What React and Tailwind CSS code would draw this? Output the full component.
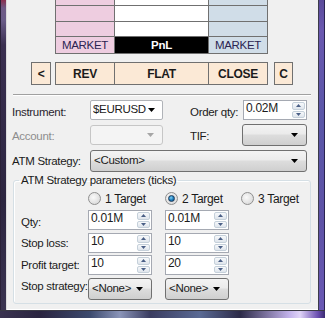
const TXT = "font-['Liberation_Sans',Arial,sans-serif] text-[11.5px] tracking-[-0.3px] text-[#1b1b1b] whitespace-nowrap";

function Tri({ color = "#000", w = 7, h = 4 }) {
  return (
    <svg width={w} height={h} viewBox={`0 0 ${w} ${h}`} className="shrink-0">
      <path d={`M0 0 L${w} 0 L${w / 2} ${h} Z`} fill={color} />
    </svg>
  );
}

function SpinButtons() {
  return (
    <div className="flex flex-col w-[14px] h-full py-[1px] pr-[1px] gap-[1px] shrink-0">
      <div className="flex-1 border border-[#c5d0da] rounded-[2px] bg-gradient-to-b from-[#f7f9fb] to-[#dfe5ec] flex items-center justify-center">
        <svg width="5" height="3" viewBox="0 0 5 3">
          <path d="M2.5 0 L5 3 L0 3 Z" fill="#4a5f86" />
        </svg>
      </div>
      <div className="flex-1 border border-[#c5d0da] rounded-[2px] bg-gradient-to-b from-[#f7f9fb] to-[#dfe5ec] flex items-center justify-center">
        <svg width="5" height="3" viewBox="0 0 5 3">
          <path d="M0 0 L5 0 L2.5 3 Z" fill="#4a5f86" />
        </svg>
      </div>
    </div>
  );
}

function SpinBox({ value, className }) {
  return (
    <div className={`h-[20px] border border-[#a5a9b2] bg-white flex ${className}`}>
      <div className="flex-1 pl-[2px] leading-[15px] text-[12px]">{value}</div>
      <SpinButtons />
    </div>
  );
}

function GradCombo({ value, className }) {
  return (
    <div
      className={`h-[22px] border border-[#707070] rounded-[3px] flex items-center pl-[3px] pr-[8px] bg-[linear-gradient(to_bottom,#f3f3f3_0%,#ebebeb_45%,#dddddd_50%,#cfcfcf_100%)] ${className}`}
    >
      <div className="flex-1 overflow-hidden">{value}</div>
      <Tri />
    </div>
  );
}

function Radio({ checked, label }) {
  return (
    <div className="flex items-center gap-[4px]">
      <div className="w-[13px] h-[13px] rounded-full border border-[#8f8f8f] bg-[radial-gradient(circle_at_40%_40%,#fafafa_0%,#e2e2e2_60%,#cfcfcf_100%)] flex items-center justify-center">
        {checked && (
          <div className="w-[7px] h-[7px] rounded-full border border-[#1d3b5a] bg-[radial-gradient(circle_at_40%_35%,#7fd0f5_0%,#1a78b8_55%,#0d4a7a_100%)]" />
        )}
      </div>
      <span className="text-[12px]">{label}</span>
    </div>
  );
}

export default function App() {
  return (
    <div className={`w-[325px] h-[318px] overflow-hidden flex flex-col bg-[#f0f0f0] ${TXT}`}>
      <div className="flex flex-1 min-h-0">
        {/* left frame */}
        <div className="w-[7px] h-full flex">
          <div className="w-[6px] h-full bg-[linear-gradient(to_bottom,#8a2f4e_0px,#6f5a86_8px,#6a5c88_20px,#3a2f50_45px,#2c2540_200px,#3a3350_310px)] border-l border-[#2a2138]" />
          <div className="w-[1px] h-full bg-[#dcdcdc]" />
        </div>

        {/* content */}
        <div className="w-[311px] h-full flex flex-col">
          {/* table */}
          <div className="ml-[48px] w-[213px] flex flex-col border-l border-[#707070]">
            <div className="flex h-[6px]">
              <div className="w-[59px] bg-[#eecde0] border-r border-b border-[#707070]" />
              <div className="w-[94px] bg-white border-r border-b border-[#707070]" />
              <div className="w-[59px] bg-[#d0dde8] border-r border-b border-[#707070]" />
            </div>
            <div className="flex h-[16px]">
              <div className="w-[59px] bg-[#eecde0] border-r border-b border-[#707070]" />
              <div className="w-[94px] bg-white border-r border-b border-[#707070]" />
              <div className="w-[59px] bg-[#d0dde8] border-r border-b border-[#707070]" />
            </div>
            <div className="flex h-[15px]">
              <div className="w-[59px] bg-[#eecde0] border-r border-b border-[#707070]" />
              <div className="w-[94px] bg-white border-r border-b border-[#707070]" />
              <div className="w-[59px] bg-[#d0dde8] border-r border-b border-[#707070]" />
            </div>
            <div className="flex h-[17px] leading-[16px]">
              <div className="w-[59px] bg-[#eecde0] border-r border-b border-[#707070] text-center text-[#2b2452]">MARKET</div>
              <div className="w-[94px] bg-black border-r border-b border-[#707070] text-center text-white font-bold">PnL</div>
              <div className="w-[59px] bg-[#d0dde8] border-r border-b border-[#707070] text-center text-[#2b2452]">MARKET</div>
            </div>
          </div>

          {/* buttons */}
          <div className="mt-[8px] flex h-[23px] font-bold text-[12px]">
            <div className="ml-[24px] w-[20px] border border-[#707070] bg-[#fbe9d6] flex items-center justify-center">&lt;</div>
            <div className="ml-[4px] w-[213px] flex border border-[#707070] bg-[#fbe9d6]">
              <div className="w-[58px] flex items-center justify-center">REV</div>
              <div className="w-[94px] border-l border-[#707070] flex items-center justify-center">FLAT</div>
              <div className="w-[59px] border-l border-[#707070] flex items-center justify-center">CLOSE</div>
            </div>
            <div className="ml-[6px] w-[19px] border border-[#707070] bg-[#fbe9d6] flex items-center justify-center">C</div>
          </div>

          {/* separator */}
          <div className="mt-[9px] ml-[6px] w-[298px] h-[2px] border-t border-[#a0a0a0] border-b border-b-white" />

          {/* instrument row */}
          <div className="mt-[4px] flex items-center h-[20px] pl-[5px]">
            <div className="w-[78px] pt-[6px] text-[#2a1f2e]">Instrument:</div>
            <div className="w-[73px] h-[20px] border border-[#b0b3b8] rounded-[2px] bg-white flex items-center pl-[2px] pr-[7px]">
              <div className="flex-1 overflow-hidden">$EURUSD</div>
              <Tri />
            </div>
            <div className="ml-[27px] w-[53px] pt-[6px]">Order qty:</div>
            <SpinBox value="0.02M" className="w-[64px]" />
          </div>

          {/* account row */}
          <div className="mt-[5px] flex items-center h-[20px] pl-[5px]">
            <div className="w-[78px] pt-[3px] text-[#8d8d8d]">Account:</div>
            <div className="w-[73px] h-[20px] border border-[#c6c6c6] rounded-[3px] bg-[#f4f4f4] flex items-center justify-end pr-[8px]">
              <Tri color="#a6a6a6" />
            </div>
            <div className="ml-[27px] w-[52px] pt-[3px]">TIF:</div>
            <GradCombo value="" className="w-[65px] h-[21px]" />
          </div>

          {/* ATM row */}
          <div className="mt-[5px] flex items-center h-[22px] pl-[5px]">
            <div className="w-[78px] pt-[1px]">ATM Strategy:</div>
            <GradCombo value="<Custom>" className="w-[217px]" />
          </div>

          {/* group box */}
          <fieldset className="mt-[1px] ml-[6px] w-[298px] border border-[#d5dfe5] rounded-[3px] pb-[3px] shadow-[inset_1px_1px_0_#ffffff]">
            <legend className="ml-[5px] px-[2px] leading-[14px]">ATM Strategy parameters (ticks)</legend>
            <div className="pl-[7px] flex flex-col">
              <div className="mt-[5px] flex h-[13px] items-center">
                <div className="w-[67px]" />
                <div className="w-[77px]"><Radio label="1 Target" /></div>
                <div className="w-[76px]"><Radio checked label="2 Target" /></div>
                <div><Radio label="3 Target" /></div>
              </div>
              <div className="mt-[5px] flex h-[20px] items-center">
                <div className="w-[67px] pt-[5px]">Qty:</div>
                <div className="w-[77px]"><SpinBox value="0.01M" className="w-[64px]" /></div>
                <SpinBox value="0.01M" className="w-[64px]" />
              </div>
              <div className="mt-[3px] flex h-[20px] items-center">
                <div className="w-[67px] pt-[2px]">Stop loss:</div>
                <div className="w-[77px]"><SpinBox value="10" className="w-[64px]" /></div>
                <SpinBox value="10" className="w-[64px]" />
              </div>
              <div className="mt-[2px] flex h-[20px] items-center">
                <div className="w-[67px] pt-[2px]">Profit target:</div>
                <div className="w-[77px]"><SpinBox value="10" className="w-[64px]" /></div>
                <SpinBox value="20" className="w-[64px]" />
              </div>
              <div className="mt-[3px] flex h-[22px] items-center">
                <div className="w-[67px] pb-[5px]">Stop strategy:</div>
                <div className="w-[77px]"><GradCombo value="<None>" className="w-[64px]" /></div>
                <GradCombo value="<None>" className="w-[64px]" />
              </div>
            </div>
          </fieldset>
          <div className="flex-1" />
          <div className="h-[1px] bg-white" />
        </div>

        {/* right frame */}
        <div className="w-[7px] h-full flex">
          <div className="w-[1px] h-full bg-[#3c3c4a]" />
          <div className="w-[5px] h-full bg-[linear-gradient(to_bottom,#5a4a9a_0px,#6a58b0_30px,#5a56a8_120px,#5e52a6_220px,#6a58b4_310px)]" />
          <div className="w-[1px] h-full bg-[#2a2450]" />
        </div>
      </div>

      {/* bottom frame */}
      <div className="h-[8px] flex flex-col">
        <div className="h-[1px] bg-[#3a3a44]" />
        <div className="flex-1 bg-[linear-gradient(to_right,#3a3350_0px,#2a2440_40px,#3c4a6e_90px,#8a94b8_120px,#3a3c60_150px,#5a6a94_200px,#2c2a48_240px,#c4b4ec_290px,#e0d4f8_300px,#6a4eb0_318px,#3a2a70_325px)]" />
      </div>
    </div>
  );
}
